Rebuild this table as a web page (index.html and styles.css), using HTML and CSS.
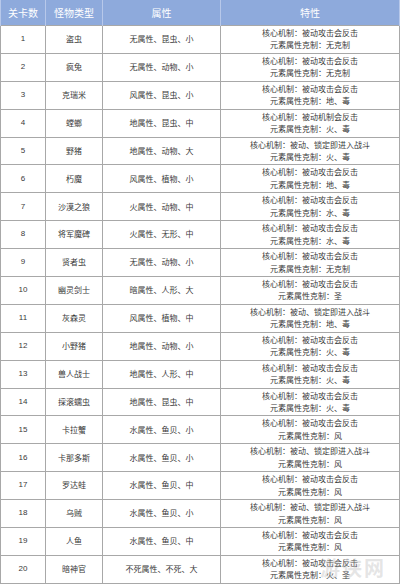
FILE: index.html
```html
<!DOCTYPE html>
<html lang="zh">
<head>
<meta charset="utf-8">
<link rel="stylesheet" href="styles.css">
</head>
<body>
<div class="wrap">
<table class="tbl">
<colgroup><col class="c1"><col class="c2"><col class="c3"><col class="c4"></colgroup>
<thead>
<tr><th>关卡数</th><th>怪物类型</th><th>属性</th><th>特性</th></tr>
</thead>
<tbody>
<tr><td class="num">1</td><td>盗虫</td><td>无属性、昆虫、小</td><td><div>核心机制：被动攻击会反击</div><div>元素属性克制：无克制</div></td></tr>
<tr><td class="num">2</td><td>疯兔</td><td>无属性、动物、小</td><td><div>核心机制：被动攻击会反击</div><div>元素属性克制：无克制</div></td></tr>
<tr><td class="num">3</td><td>克瑞米</td><td>风属性、昆虫、小</td><td><div>核心机制：被动攻击会反击</div><div>元素属性克制：地、毒</div></td></tr>
<tr><td class="num">4</td><td>螳螂</td><td>地属性、昆虫、中</td><td><div>核心机制：被动机制会反击</div><div>元素属性克制：火、毒</div></td></tr>
<tr><td class="num">5</td><td>野猪</td><td>地属性、动物、大</td><td><div>核心机制：被动、锁定即进入战斗</div><div>元素属性克制：火、毒</div></td></tr>
<tr><td class="num">6</td><td>朽魔</td><td>风属性、植物、小</td><td><div>核心机制：被动攻击会反击</div><div>元素属性克制：地、毒</div></td></tr>
<tr><td class="num">7</td><td>沙漠之狼</td><td>火属性、动物、中</td><td><div>核心机制：被动攻击会反击</div><div>元素属性克制：水、毒</div></td></tr>
<tr><td class="num">8</td><td>将军魔碑</td><td>火属性、无形、中</td><td><div>核心机制：被动攻击会反击</div><div>元素属性克制：水、毒</div></td></tr>
<tr><td class="num">9</td><td>贤者虫</td><td>无属性、动物、小</td><td><div>核心机制：被动攻击会反击</div><div>元素属性克制：无克制</div></td></tr>
<tr><td class="num">10</td><td>幽灵剑士</td><td>暗属性、人形、大</td><td><div>核心机制：被动攻击会反击</div><div>元素属性克制：圣</div></td></tr>
<tr><td class="num">11</td><td>灰森灵</td><td>风属性、植物、中</td><td><div>核心机制：被动、锁定即进入战斗</div><div>元素属性克制：地、毒</div></td></tr>
<tr><td class="num">12</td><td>小野猪</td><td>地属性、动物、小</td><td><div>核心机制：被动攻击会反击</div><div>元素属性克制：火、毒</div></td></tr>
<tr><td class="num">13</td><td>兽人战士</td><td>地属性、人形、中</td><td><div>核心机制：被动攻击会反击</div><div>元素属性克制：火、毒</div></td></tr>
<tr><td class="num">14</td><td>採滚蠕虫</td><td>地属性、昆虫、中</td><td><div>核心机制：被动攻击会反击</div><div>元素属性克制：火、毒</div></td></tr>
<tr><td class="num">15</td><td>卡拉蟹</td><td>水属性、鱼贝、小</td><td><div>核心机制：被动攻击会反击</div><div>元素属性克制：风</div></td></tr>
<tr><td class="num">16</td><td>卡那多斯</td><td>水属性、鱼贝、小</td><td><div>核心机制：被动、锁定即进入战斗</div><div>元素属性克制：风</div></td></tr>
<tr><td class="num">17</td><td>罗达蛙</td><td>水属性、鱼贝、中</td><td><div>核心机制：被动攻击会反击</div><div>元素属性克制：风</div></td></tr>
<tr><td class="num">18</td><td>乌贼</td><td>水属性、鱼贝、小</td><td><div>核心机制：被动、锁定即进入战斗</div><div>元素属性克制：风</div></td></tr>
<tr><td class="num">19</td><td>人鱼</td><td>水属性、鱼贝、中</td><td><div>核心机制：被动攻击会反击</div><div>元素属性克制：风</div></td></tr>
<tr><td class="num">20</td><td>暗神官</td><td>不死属性、不死、大</td><td><div>核心机制：被动攻击会反击</div><div>元素属性克制：火、圣</div></td></tr>
</tbody>
</table>
<div class="mark">游侠网</div>
</div>
</body>
</html>
```
FILE: styles.css
```css
html, body {
  margin: 0;
  padding: 0;
  background: #ffffff;
}
.wrap {
  position: relative;
  width: 400px;
  height: 584px;
  overflow: hidden;
}
.tbl {
  border-collapse: collapse;
  table-layout: fixed;
  width: 399px;
  font-family: "Noto Sans CJK SC", "Noto Sans", sans-serif;
  color: #3a3a3a;
}
.c1 { width: 45px; }
.c2 { width: 57px; }
.c3 { width: 118px; }
.c4 { width: 179px; }
.tbl th {
  height: 25px;
  padding: 0;
  background: #8eaadc;
  color: #ffffff;
  font-weight: normal;
  font-size: 10px;
  border-left: 1px solid #b7c8ea;
  border-right: 1px solid #b7c8ea;
  text-align: center;
  vertical-align: middle;
}
.tbl td {
  height: 26.9px;
  padding: 0;
  border: 1px solid #a8a8a8;
  font-size: 8px;
  line-height: 12.5px;
  text-align: center;
  vertical-align: middle;
  white-space: nowrap;
}
.tbl td.num {
  font-family: "Liberation Sans", Arial, sans-serif;
  font-size: 8px;
}
.mark {
  position: absolute;
  right: 14px;
  bottom: 2px;
  font-family: "Noto Sans CJK SC", sans-serif;
  font-size: 20px;
  font-weight: bold;
  color: rgba(180, 180, 180, 0.35);
  letter-spacing: 2px;
}
```
